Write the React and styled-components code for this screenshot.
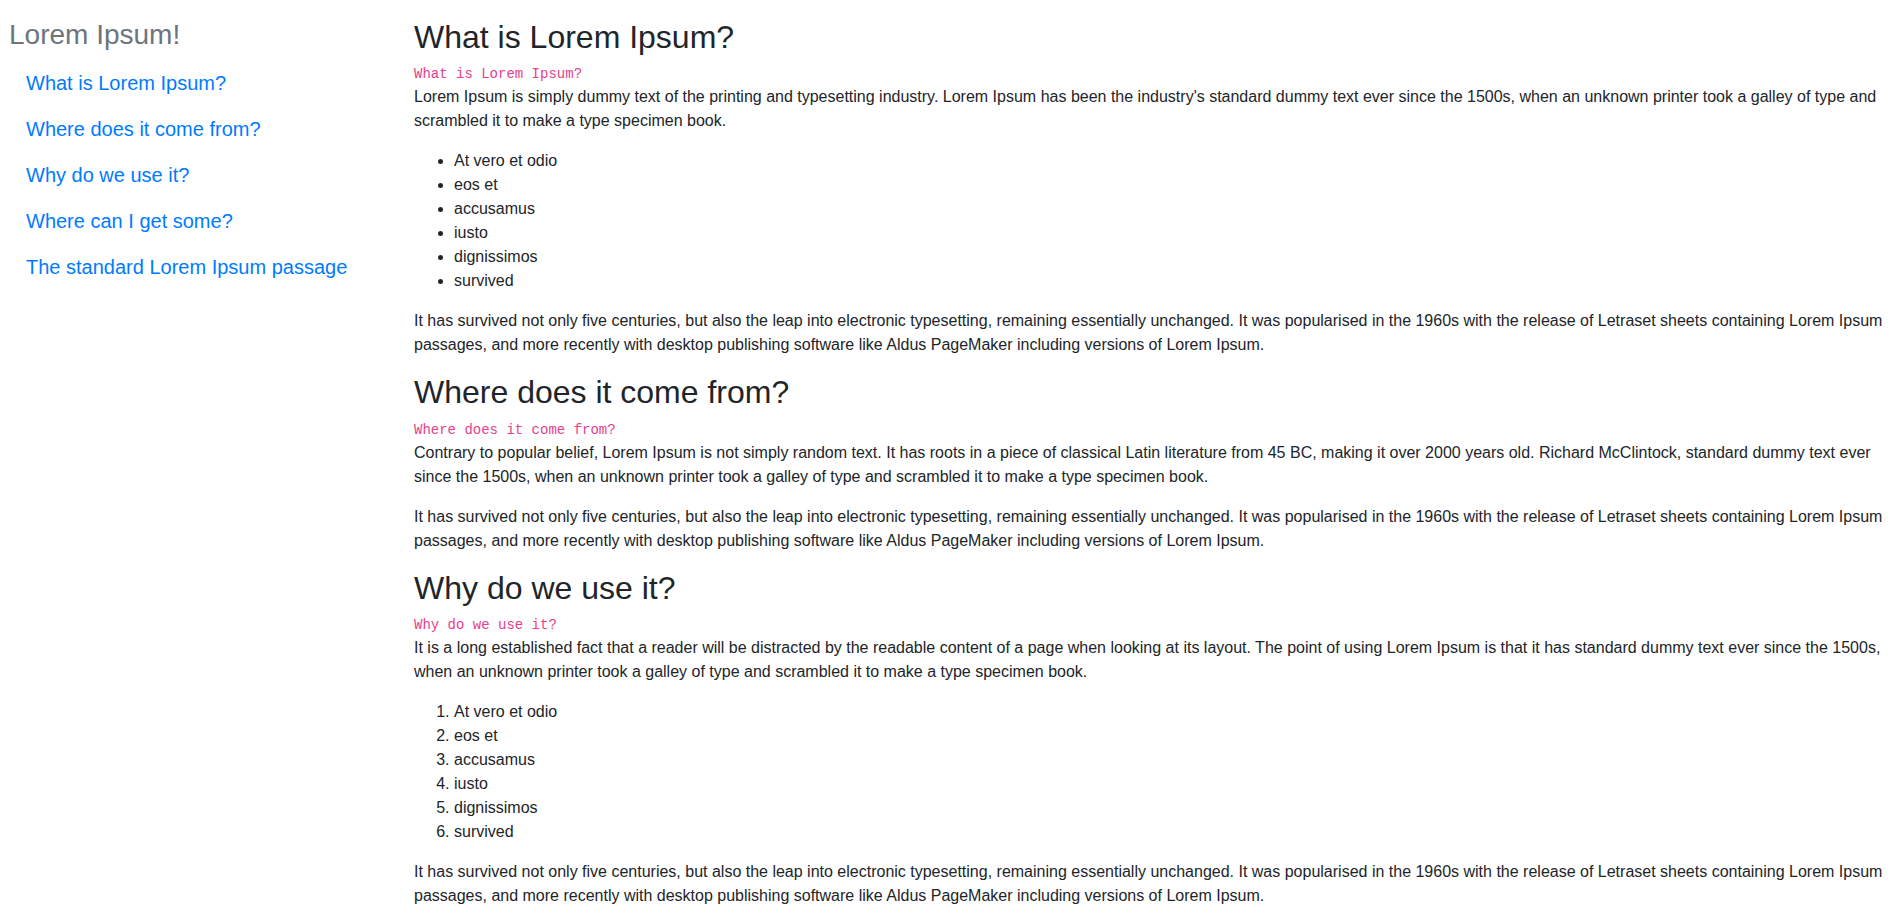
import React from 'react';
import styled, { createGlobalStyle } from 'styled-components';

const GlobalStyle = createGlobalStyle`
    * {
        box-sizing: border-box;
    }
    body {
        margin: 0;
        background: #fff;
        color: #212529;
        font-family: 'Liberation Sans', Arial, sans-serif;
        font-size: 16px;
        line-height: 1.5;
    }
`;

const links = [
    'What is Lorem Ipsum?',
    'Where does it come from?',
    'Why do we use it?',
    'Where can I get some?',
    'The standard Lorem Ipsum passage'
];

const items = ['At vero et odio', 'eos et', 'accusamus', 'iusto', 'dignissimos', 'survived'];

const survived =
    'It has survived not only five centuries, but also the leap into electronic typesetting, remaining essentially unchanged. It was popularised in the 1960s with the release of Letraset sheets containing Lorem Ipsum passages, and more recently with desktop publishing software like Aldus PageMaker including versions of Lorem Ipsum.';

function App() {
    return (
        <>
            <GlobalStyle />
            <Page>
                <Sidebar>
                    <Brand>Lorem Ipsum!</Brand>
                    <Nav>
                        {links.map((l) => (
                            <NavLink key={l} href="#">
                                {l}
                            </NavLink>
                        ))}
                    </Nav>
                </Sidebar>
                <Main>
                    <section>
                        <Title>What is Lorem Ipsum?</Title>
                        <Code>What is Lorem Ipsum?</Code>
                        <Text>
                            Lorem Ipsum is simply dummy text of the printing and typesetting
                            industry. Lorem Ipsum has been the industry's standard dummy text
                            ever since the 1500s, when an unknown printer took a galley of type
                            and scrambled it to make a type specimen book.
                        </Text>
                        <List>
                            {items.map((i) => (
                                <li key={i}>{i}</li>
                            ))}
                        </List>
                        <Text>{survived}</Text>
                    </section>
                    <section>
                        <Title>Where does it come from?</Title>
                        <Code>Where does it come from?</Code>
                        <Text>
                            Contrary to popular belief, Lorem Ipsum is not simply random text. It
                            has roots in a piece of classical Latin literature from 45 BC, making
                            it over 2000 years old. Richard McClintock, standard dummy text ever
                            since the 1500s, when an unknown printer took a galley of type and
                            scrambled it to make a type specimen book.
                        </Text>
                        <Text>{survived}</Text>
                    </section>
                    <section>
                        <Title>Why do we use it?</Title>
                        <Code>Why do we use it?</Code>
                        <Text>
                            It is a long established fact that a reader will be distracted by the
                            readable content of a page when looking at its layout. The point of
                            using Lorem Ipsum is that it has standard dummy text ever since the
                            1500s, when an unknown printer took a galley of type and scrambled it
                            to make a type specimen book.
                        </Text>
                        <List as="ol">
                            {items.map((i) => (
                                <li key={i}>{i}</li>
                            ))}
                        </List>
                        <Text>{survived}</Text>
                    </section>
                </Main>
            </Page>
        </>
    );
}

export default App;

const Page = styled.div`
    display: grid;
    grid-template-columns: 405px 1fr;
    align-items: start;
    padding: 18px 8px 0 9px;
`;

const Sidebar = styled.aside`
    display: flex;
    flex-direction: column;
`;

const Brand = styled.h3`
    margin: 0 0 8px;
    font-size: 28px;
    font-weight: 500;
    line-height: 1.2;
    color: #6c757d;
`;

const Nav = styled.nav`
    display: flex;
    flex-direction: column;
    align-items: flex-start;
`;

const NavLink = styled.a`
    display: block;
    padding: 8px 16px 8px 17px;
    font-size: 20px;
    line-height: 1.5;
    color: #007bff;
    text-decoration: none;
`;

const Main = styled.main`
    min-width: 0;
`;

const Title = styled.h2`
    margin: 0 0 8px;
    font-size: 32px;
    font-weight: 500;
    line-height: 1.2;
`;

const Code = styled.code`
    display: block;
    font-family: 'Liberation Mono', 'Courier New', monospace;
    font-size: 14px;
    line-height: 1.5;
    color: #e83e8c;
`;

const Text = styled.p`
    margin: 0 0 16px;
`;

const List = styled.ul`
    margin: 0 0 16px;
    padding-left: 40px;
`;
